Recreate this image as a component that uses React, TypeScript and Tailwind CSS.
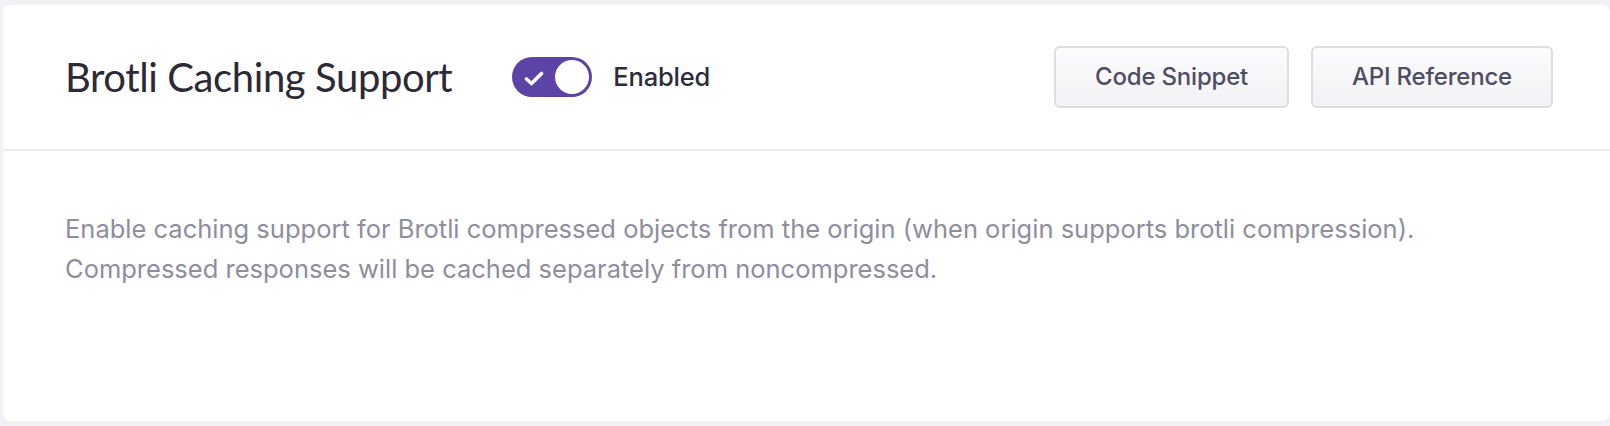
import React, { useState } from "react";

function CheckIcon() {
  return (
    <svg viewBox="0 0 20 15" className="w-[20px] h-[15px]" fill="none">
      <path d="M2.5 8 L7.5 12.5 L17.5 2.5" stroke="white" strokeWidth="3.6" strokeLinecap="round" strokeLinejoin="round" />
    </svg>
  );
}

export default function App() {
  const [enabled, setEnabled] = useState(true);

  return (
    <div className="min-h-[426px] bg-[#f1f1f6] pt-[5px] pl-[3px]" style={{ fontFamily: "Inter, 'Noto Sans', sans-serif" }}>
      <div className="bg-white rounded-lg h-[416px] flex flex-col">
        {/* Header */}
        <div className="h-[146px] flex items-center justify-between pl-[62px] pr-[57px] border-b-2 border-[#ececf0]">
          <div className="flex items-center">
            <h1 className="text-[40px] text-[#2c2a36] font-normal tracking-[-0.4px] leading-none" style={{ fontFamily: "Lato, 'Noto Sans', sans-serif" }}>
              Brotli Caching Support
            </h1>
            <button
              onClick={() => setEnabled(!enabled)}
              className={`ml-[60px] w-[80px] h-[40px] rounded-full p-[3px] flex items-center justify-between ${enabled ? "bg-[#5c44a7]" : "bg-[#d6d5de]"}`}
            >
              <span className="pl-[9px] pt-[2px] flex items-center">{enabled && <CheckIcon />}</span>
              <span className="w-[34px] h-[34px] rounded-full bg-white" />
            </button>
            <span className="ml-[21px] text-[25.5px] font-medium text-[#2e2c3a] tracking-[-0.2px]">
              {enabled ? "Enabled" : "Disabled"}
            </span>
          </div>

          <div className="flex items-center gap-[22px]">
            <button className="h-[62px] px-[39px] rounded-md border-2 border-[#dedde4] bg-gradient-to-b from-[#fcfcfd] to-[#f2f2f6] text-[24px] font-medium text-[#4f4d63] tracking-[-0.2px]">
              Code Snippet
            </button>
            <button className="h-[62px] px-[39px] rounded-md border-2 border-[#dedde4] bg-gradient-to-b from-[#fcfcfd] to-[#f2f2f6] text-[24px] font-medium text-[#4f4d63] tracking-[-0.2px]">
              API Reference
            </button>
          </div>
        </div>

        {/* Body */}
        <div className="pl-[62px] pt-[58px]">
          <p className="text-[25.5px] leading-[40px] text-[#8f8d9e]">
            Enable caching support for Brotli compressed objects from the origin (when origin supports brotli compression).
            <br />
            Compressed responses will be cached separately from noncompressed.
          </p>
        </div>
      </div>
    </div>
  );
}
